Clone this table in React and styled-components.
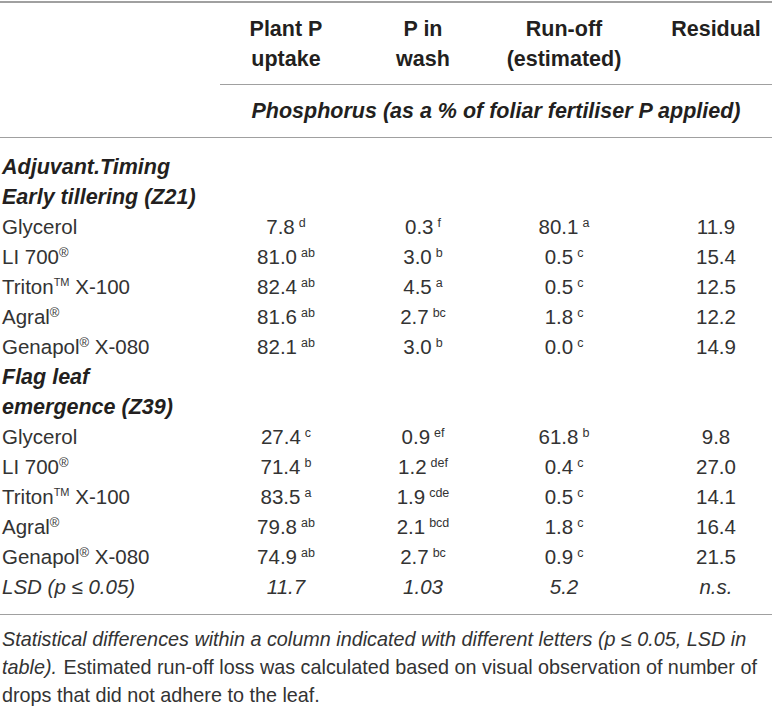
import React from "react";
import styled, { createGlobalStyle } from "styled-components";

const GlobalStyle = createGlobalStyle`
  body {
    margin: 0;
    background: #fff;
    font-family: "Liberation Sans", Arial, sans-serif;
    color: #333;
  }
`;

const COLS = "220px 132px 142px 140px 138px";

const Table = styled.div`
  width: 772px;
  padding-top: 1px;
`;

const Rule = styled.div`
  height: 0;
  border-top: ${(p) => (p.thick ? "2px" : "1.5px")} solid #a0a0a0;
  margin-left: ${(p) => p.indent || 0}px;
`;

const HeadRow = styled.div`
  display: grid;
  grid-template-columns: ${COLS};
  height: 81px;
  align-items: center;
`;

const HeadCell = styled.div`
  font-weight: 700;
  font-size: 21.5px;
  line-height: 30px;
  color: #231f20;
  text-align: center;
  padding-left: ${(p) => p.shift || 0}px;
`;

const UnitRow = styled.div`
  display: grid;
  grid-template-columns: ${COLS};
  height: 52px;
  align-items: center;
`;

const UnitCell = styled.div`
  grid-column: 2 / 6;
  text-align: center;
  font-weight: 700;
  font-style: italic;
  font-size: 21.5px;
  color: #231f20;
`;

const Body = styled.div`
  padding: 14px 0 12px;
`;

const Row = styled.div`
  display: grid;
  grid-template-columns: ${COLS};
  height: 30px;
  align-items: center;
  font-size: 20.5px;
  font-style: ${(p) => (p.italic ? "italic" : "normal")};
`;

const Label = styled.div`
  padding-left: 2px;
  white-space: nowrap;
  font-size: ${(p) => (p.heading ? "21.5px" : "inherit")};
  font-weight: ${(p) => (p.heading ? 700 : 400)};
  font-style: ${(p) => (p.heading ? "italic" : "inherit")};
  color: ${(p) => (p.heading ? "#231f20" : "#333")};
`;

const Cell = styled.div`
  text-align: center;
  white-space: nowrap;
  padding-left: ${(p) => p.shift || 0}px;
`;

const Sup = styled.sup`
  font-size: 12.5px;
  vertical-align: 7px;
  line-height: 0;
  margin-left: 4px;
`;

const Mark = styled.sup`
  font-size: ${(p) => (p.small ? "11px" : "13px")};
  vertical-align: ${(p) => (p.small ? "8px" : "7px")};
  line-height: 0;
`;

const Note = styled.p`
  margin: 0;
  padding: 10px 0 0 2px;
  font-size: 19.8px;
  line-height: 28px;
  color: #333;
`;

const Em = styled.em`
  font-style: italic;
  margin-right: 1px;
`;

const V = ({ v, s }) => (
  <>
    {v}
    {s && <Sup>{s}</Sup>}
  </>
);

const reg = <Mark>®</Mark>;
const tm = <Mark small>TM</Mark>;

const names = [
  <>Glycerol</>,
  <>LI 700{reg}</>,
  <>Triton{tm} X-100</>,
  <>Agral{reg}</>,
  <>Genapol{reg} X-080</>,
];

const early = [
  [["7.8", "d"], ["0.3", "f"], ["80.1", "a"], "11.9"],
  [["81.0", "ab"], ["3.0", "b"], ["0.5", "c"], "15.4"],
  [["82.4", "ab"], ["4.5", "a"], ["0.5", "c"], "12.5"],
  [["81.6", "ab"], ["2.7", "bc"], ["1.8", "c"], "12.2"],
  [["82.1", "ab"], ["3.0", "b"], ["0.0", "c"], "14.9"],
];

const flag = [
  [["27.4", "c"], ["0.9", "ef"], ["61.8", "b"], "9.8"],
  [["71.4", "b"], ["1.2", "def"], ["0.4", "c"], "27.0"],
  [["83.5", "a"], ["1.9", "cde"], ["0.5", "c"], "14.1"],
  [["79.8", "ab"], ["2.1", "bcd"], ["1.8", "c"], "16.4"],
  [["74.9", "ab"], ["2.7", "bc"], ["0.9", "c"], "21.5"],
];

const DataRows = ({ data }) =>
  data.map((d, i) => (
    <Row key={i}>
      <Label>{names[i]}</Label>
      <Cell>
        <V v={d[0][0]} s={d[0][1]} />
      </Cell>
      <Cell>
        <V v={d[1][0]} s={d[1][1]} />
      </Cell>
      <Cell>
        <V v={d[2][0]} s={d[2][1]} />
      </Cell>
      <Cell shift={26}>{d[3]}</Cell>
    </Row>
  ));

export default function App() {
  return (
    <>
      <GlobalStyle />
      <Table>
        <Rule thick />
        <HeadRow>
          <div />
          <HeadCell>
            Plant P
            <br />
            uptake
          </HeadCell>
          <HeadCell>
            P in
            <br />
            wash
          </HeadCell>
          <HeadCell>
            Run-off
            <br />
            (estimated)
          </HeadCell>
          <HeadCell shift={26}>
            Residual
            <br />
            &nbsp;
          </HeadCell>
        </HeadRow>
        <Rule indent={220} />
        <UnitRow>
          <UnitCell>Phosphorus (as a % of foliar fertiliser P applied)</UnitCell>
        </UnitRow>
        <Rule />
        <Body>
          <Row>
            <Label heading>Adjuvant.Timing</Label>
          </Row>
          <Row>
            <Label heading>Early tillering (Z21)</Label>
          </Row>
          <DataRows data={early} />
          <Row>
            <Label heading>Flag leaf</Label>
          </Row>
          <Row>
            <Label heading>emergence (Z39)</Label>
          </Row>
          <DataRows data={flag} />
          <Row italic>
            <Label>LSD (p ≤ 0.05)</Label>
            <Cell>11.7</Cell>
            <Cell>1.03</Cell>
            <Cell>5.2</Cell>
            <Cell shift={26}>n.s.</Cell>
          </Row>
        </Body>
        <Rule />
        <Note>
          <Em>
            Statistical differences within a column indicated with different
            letters (p ≤ 0.05, LSD in table).
          </Em>{" "}
          Estimated run-off loss was calculated based on visual observation of
          number of drops that did not adhere to the leaf.
        </Note>
      </Table>
    </>
  );
}
